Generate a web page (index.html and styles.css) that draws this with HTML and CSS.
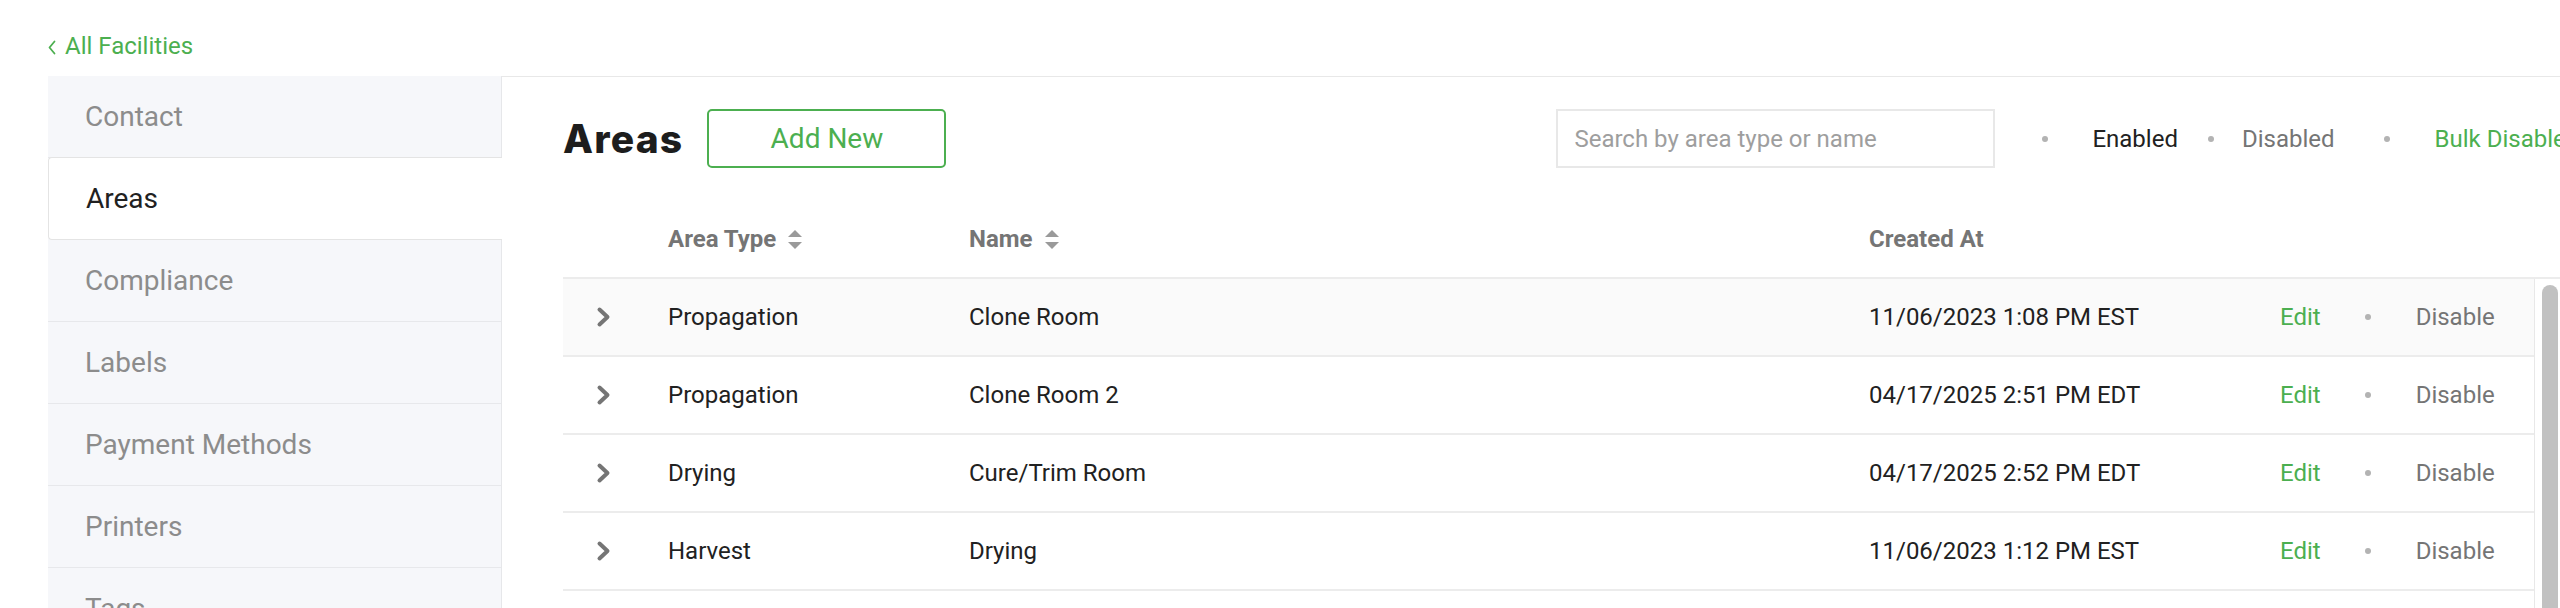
FILE: index.html
```html
<!DOCTYPE html>
<html lang="en">
<head>
<meta charset="utf-8">
<title>Areas</title>
<link rel="stylesheet" href="styles.css">
</head>
<body>
<div class="page">
  <a class="back" href="#">
    <svg class="back-icon" width="8" height="15" viewBox="0 0 8 15"><polyline points="6.5,1.5 1.5,7.5 6.5,13.5" fill="none" stroke="#4caf50" stroke-width="1.8" stroke-linecap="round" stroke-linejoin="round"/></svg>
    <span>All Facilities</span>
  </a>
  <div class="layout">
    <nav class="sidebar">
      <div class="nav-item">Contact</div>
      <div class="nav-item active">Areas</div>
      <div class="nav-item">Compliance</div>
      <div class="nav-item">Labels</div>
      <div class="nav-item">Payment Methods</div>
      <div class="nav-item">Printers</div>
      <div class="nav-item">Tags</div>
    </nav>
    <main class="main">
      <div class="toolbar">
        <h1 class="title">Areas</h1>
        <button class="add-btn">Add New</button>
        <div class="search"><input class="search-input" type="text" placeholder="Search by area type or name"></div>
        <span class="dot dot-first"></span>
        <span class="filter filter-active">Enabled</span>
        <span class="dot dot-mid"></span>
        <span class="filter filter-disabled">Disabled</span>
        <span class="dot dot-last"></span>
        <a class="bulk" href="#">Bulk Disable</a>
      </div>
      <div class="table">
        <div class="thead grid">
          <div></div>
          <div class="th">Area Type <svg class="sort" width="14" height="19" viewBox="0 0 14 19"><polygon points="7,0 14,7 0,7" fill="#9a9a9a"/><polygon points="0,12 14,12 7,19" fill="#9a9a9a"/></svg></div>
          <div class="th">Name <svg class="sort" width="14" height="19" viewBox="0 0 14 19"><polygon points="7,0 14,7 0,7" fill="#9a9a9a"/><polygon points="0,12 14,12 7,19" fill="#9a9a9a"/></svg></div>
          <div class="th">Created At</div>
          <div></div>
        </div>
        <div class="tbody">
          <div class="rows">
            <div class="tr grid hover">
              <div class="expander"><svg width="15" height="22" viewBox="0 0 15 22"><polyline points="3.5,3.5 11.5,11 3.5,18.5" fill="none" stroke="#757575" stroke-width="4" stroke-linecap="round" stroke-linejoin="round"/></svg></div>
              <div>Propagation</div>
              <div>Clone Room</div>
              <div>11/06/2023 1:08 PM EST</div>
              <div class="actions"><a class="edit" href="#">Edit</a><span class="dot dot-act"></span><a class="disable" href="#">Disable</a></div>
            </div>
            <div class="tr grid">
              <div class="expander"><svg width="15" height="22" viewBox="0 0 15 22"><polyline points="3.5,3.5 11.5,11 3.5,18.5" fill="none" stroke="#757575" stroke-width="4" stroke-linecap="round" stroke-linejoin="round"/></svg></div>
              <div>Propagation</div>
              <div>Clone Room 2</div>
              <div>04/17/2025 2:51 PM EDT</div>
              <div class="actions"><a class="edit" href="#">Edit</a><span class="dot dot-act"></span><a class="disable" href="#">Disable</a></div>
            </div>
            <div class="tr grid">
              <div class="expander"><svg width="15" height="22" viewBox="0 0 15 22"><polyline points="3.5,3.5 11.5,11 3.5,18.5" fill="none" stroke="#757575" stroke-width="4" stroke-linecap="round" stroke-linejoin="round"/></svg></div>
              <div>Drying</div>
              <div>Cure/Trim Room</div>
              <div>04/17/2025 2:52 PM EDT</div>
              <div class="actions"><a class="edit" href="#">Edit</a><span class="dot dot-act"></span><a class="disable" href="#">Disable</a></div>
            </div>
            <div class="tr grid">
              <div class="expander"><svg width="15" height="22" viewBox="0 0 15 22"><polyline points="3.5,3.5 11.5,11 3.5,18.5" fill="none" stroke="#757575" stroke-width="4" stroke-linecap="round" stroke-linejoin="round"/></svg></div>
              <div>Harvest</div>
              <div>Drying</div>
              <div>11/06/2023 1:12 PM EST</div>
              <div class="actions"><a class="edit" href="#">Edit</a><span class="dot dot-act"></span><a class="disable" href="#">Disable</a></div>
            </div>
          </div>
          <div class="scrollbar"><div class="thumb"></div></div>
        </div>
      </div>
    </main>
  </div>
</div>
</body>
</html>
```

FILE: styles.css
```css
* { box-sizing: border-box; }
html, body {
  margin: 0;
  padding: 0;
  height: 100%;
  overflow: hidden;
  background: #ffffff;
}
body {
  font-family: Roboto, "Liberation Sans", Arial, sans-serif;
  color: #212121;
}
.page {
  height: 100vh;
  display: flex;
  flex-direction: column;
}
.back {
  display: flex;
  align-items: center;
  height: 28px;
  margin-top: 32px;
  padding-left: 48px;
  font-size: 24px;
  color: #4caf50;
  text-decoration: none;
  gap: 9px;
}
.back-icon { display: block; margin-top: 2px; }
.layout {
  margin-top: 16px;
  flex: 1;
  display: flex;
  min-height: 0;
}
.sidebar {
  width: 454px;
  flex: none;
  margin-left: 48px;
  background: #f6f7fa;
  border-right: 1px solid #e6e7ea;
  display: flex;
  flex-direction: column;
}
.nav-item {
  height: 82px;
  flex: none;
  display: flex;
  align-items: center;
  padding-left: 37px;
  font-size: 28px;
  color: #8c8c8c;
  border-bottom: 1px solid #e7e8eb;
}
.nav-item.active {
  background: #ffffff;
  color: #212121;
  border: 1px solid #e4e4e4;
  border-right: none;
  border-radius: 4px 0 0 4px;
  margin-right: -1px;
  margin-top: -1px;
  height: 83px;
  position: relative;
}
.main {
  flex: 1;
  min-width: 0;
  border-top: 1px solid #e8e8e8;
  overflow: hidden;
  display: flex;
  flex-direction: column;
}
.toolbar {
  display: flex;
  align-items: center;
  height: 59px;
  margin-top: 32px;
  padding-left: 61px;
  white-space: nowrap;
  flex: none;
}
.title {
  margin: 0;
  font-family: Inter, "Open Sans", sans-serif;
  font-weight: 800;
  font-size: 39px;
  color: #1d1d1d;
  letter-spacing: 1.2px;
}
.add-btn {
  margin-left: 24px;
  width: 239px;
  height: 59px;
  border: 2px solid #4caf50;
  border-radius: 5px;
  background: #ffffff;
  color: #4caf50;
  font-family: Roboto, sans-serif;
  font-size: 28px;
  flex: none;
}
.search {
  margin-left: 610px;
  width: 439px;
  height: 59px;
  border: 2px solid #e8e8e8;
  flex: none;
}
.search-input {
  width: 100%;
  height: 100%;
  border: none;
  outline: none;
  padding: 0 0 0 16px;
  font-family: Roboto, sans-serif;
  font-size: 24px;
  color: #212121;
  background: transparent;
}
.search-input::placeholder { color: #9e9e9e; }
.dot {
  display: inline-block;
  width: 6px;
  height: 6px;
  border-radius: 50%;
  background: #b3b3b3;
  flex: none;
}
.dot-first { margin-left: 47px; }
.dot-mid { margin-left: 30px; }
.dot-last { margin-left: 49px; }
.filter { font-size: 24px; }
.filter-active { margin-left: 44px; color: #212121; }
.filter-disabled { margin-left: 28px; color: #757575; }
.bulk {
  margin-left: 45px;
  font-size: 24px;
  color: #4caf50;
  text-decoration: none;
}
.table {
  margin-top: 33px;
  margin-left: 61px;
  flex: none;
}
.grid {
  display: grid;
  grid-template-columns: 105px 301px 900px 411px 1fr;
  align-items: center;
}
.thead {
  height: 78px;
  border-bottom: 2px solid #ececec;
}
.th {
  display: flex;
  align-items: center;
  gap: 12px;
  font-weight: 700;
  font-size: 24px;
  color: #757575;
}
.sort { display: block; }
.tbody {
  height: 360px;
  display: flex;
}
.rows {
  flex: 1;
  min-width: 0;
}
.scrollbar {
  width: 26px;
  flex: none;
  border-left: 1px solid #e8e8e8;
  padding: 6px 2px 0 7px;
  background: #ffffff;
}
.thumb {
  height: 420px;
  background: #c1c1c1;
  border-radius: 8px;
}
.tr {
  height: 78px;
  border-bottom: 2px solid #ececec;
  font-size: 24px;
  color: #212121;
}
.tr.hover { background: #fafafa; }
.expander {
  padding-left: 33px;
  display: flex;
  align-items: center;
}
.expander svg { display: block; }
.actions {
  display: flex;
  align-items: center;
}
.edit { color: #4caf50; text-decoration: none; }
.dot-act { margin-left: 44px; }
.disable { margin-left: 45px; color: #757575; text-decoration: none; }
```
